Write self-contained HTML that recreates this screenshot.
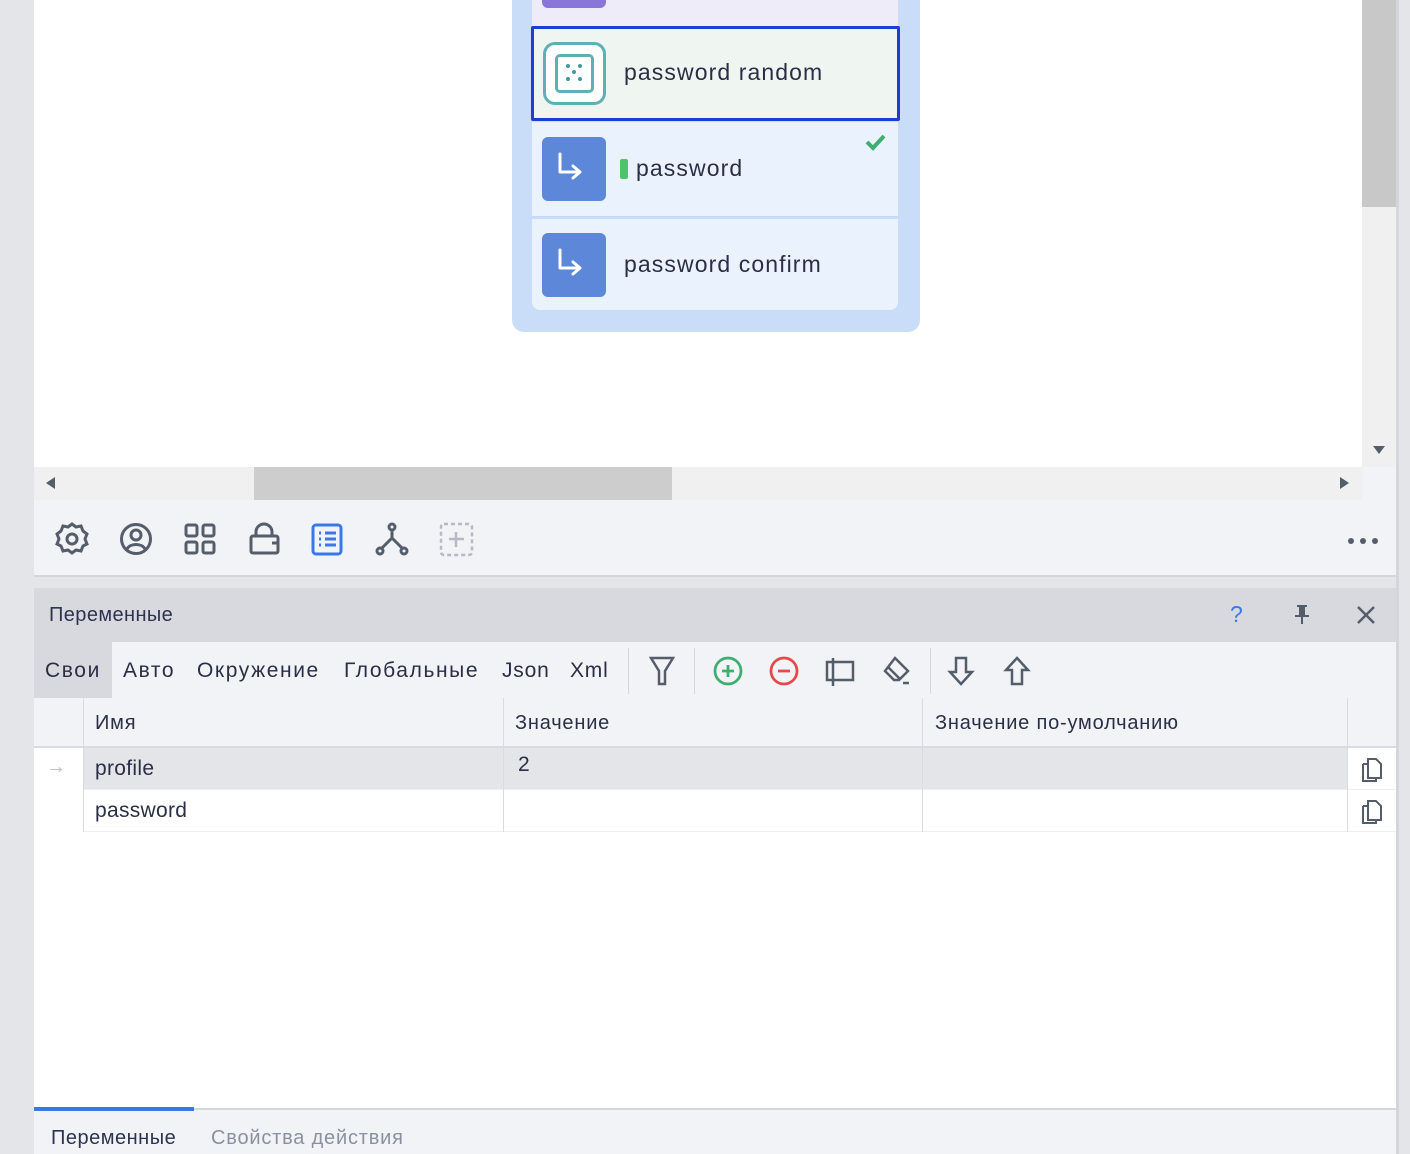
<!DOCTYPE html><html><head><meta charset="utf-8"><style>
*{margin:0;padding:0;box-sizing:border-box}
body{width:1410px;height:1154px;overflow:hidden;background:#e4e5e9;font-family:"Liberation Sans","DejaVu Sans",sans-serif;color:#2a2f45;position:relative}
.a{position:absolute}
.t{font-size:21px;white-space:nowrap;letter-spacing:0.8px}
.tab{letter-spacing:1.6px}
.n{font-size:23px;letter-spacing:1.1px}
svg{position:absolute;overflow:visible}
</style></head><body>
<!-- canvas -->
<div class="a" style="left:34px;top:0;width:1328px;height:467px;background:#fff"></div>
<div class="a" style="left:1362px;top:0;width:34px;height:467px;background:#f0f0f0"></div>
<div class="a" style="left:1362px;top:0;width:34px;height:207px;background:#c8c8c8"></div>
<div class="a" style="left:1373px;top:446px;width:0;height:0;border-left:6px solid transparent;border-right:6px solid transparent;border-top:8px solid #555d6b"></div>
<div class="a" style="left:34px;top:467px;width:1328px;height:33px;background:#f0f0f0"></div>
<div class="a" style="left:1362px;top:467px;width:34px;height:33px;background:#f2f3f7"></div>
<div class="a" style="left:254px;top:467px;width:418px;height:33px;background:#cdcdcd"></div>
<div class="a" style="left:46px;top:477px;border-top:6px solid transparent;border-bottom:6px solid transparent;border-right:9px solid #555d6b"></div>
<div class="a" style="left:1340px;top:477px;border-top:6px solid transparent;border-bottom:6px solid transparent;border-left:9px solid #555d6b"></div>
<!-- node -->
<div class="a" style="left:512px;top:-10px;width:408px;height:342px;background:#c9dcf8;border-radius:12px"></div>
<div class="a" style="left:532px;top:-10px;width:366px;height:36px;background:#eeecf8"></div>
<div class="a" style="left:542px;top:-10px;width:64px;height:18px;background:#8a75d9;border-radius:6px"></div>
<div class="a" style="left:531px;top:26px;width:369px;height:95px;background:#eff5f0;border:3px solid #1b3fd1;border-radius:2px"></div>
<div class="a" style="left:543px;top:42px;width:63px;height:63px;border:3px solid #5fb0b4;border-radius:12px;background:#fff"></div>
<div class="a" style="left:555px;top:54px;width:39px;height:39px;border:3px solid #5fb0b4;border-radius:5px"></div>
<svg style="left:555px;top:54px" width="39" height="39"><g fill="#3f9aa0"><circle cx="13" cy="12" r="2"/><circle cx="25" cy="12" r="2"/><circle cx="19" cy="18" r="2"/><circle cx="13" cy="25" r="2"/><circle cx="25" cy="25" r="2"/></g></svg>
<div class="a t n" style="left:624px;top:59px">password random</div>
<div class="a" style="left:532px;top:122px;width:366px;height:95px;background:#eaf2fd;border-bottom:1px solid #c5d8f5"></div>
<div class="a" style="left:532px;top:219px;width:366px;height:91px;background:#eaf2fd;border-radius:0 0 8px 8px"></div>
<div class="a" style="left:542px;top:137px;width:64px;height:64px;background:#5d87d9;border-radius:6px"></div>
<div class="a" style="left:542px;top:233px;width:64px;height:64px;background:#5d87d9;border-radius:6px"></div>
<svg style="left:542px;top:137px" width="64" height="64"><path d="M18 17V35H37M31 29L38 35L31 41" fill="none" stroke="#fff" stroke-width="3" stroke-linecap="round" stroke-linejoin="round"/></svg>
<svg style="left:542px;top:233px" width="64" height="64"><path d="M18 17V35H37M31 29L38 35L31 41" fill="none" stroke="#fff" stroke-width="3" stroke-linecap="round" stroke-linejoin="round"/></svg>
<div class="a" style="left:620px;top:159px;width:8px;height:20px;background:#4fc26e;border-radius:2px"></div>
<div class="a t n" style="left:636px;top:155px">password</div>
<div class="a t n" style="left:624px;top:251px">password confirm</div>
<svg style="left:864px;top:133px" width="24" height="18"><path d="M3 9L9 15L20 3" fill="none" stroke="#3fae73" stroke-width="4"/></svg>
<!-- toolbar -->
<div class="a" style="left:34px;top:500px;width:1362px;height:77px;background:#f2f3f7;border-bottom:2px solid #d4d6dc"></div>
<svg style="left:55px;top:522px" width="34" height="34" fill="none" stroke="#555d6b" stroke-width="3"><path d="M17 2l4 3 5-1 2 5 4 3-2 5 2 5-4 2-2 5-5-1-4 3-4-3-5 1-2-5-4-2 2-5-2-5 4-3 2-5 5 1z"/><circle cx="17" cy="17" r="5"/></svg>
<svg style="left:120px;top:523px" width="34" height="34" fill="none" stroke="#555d6b" stroke-width="3"><circle cx="16" cy="16" r="14.5"/><circle cx="16" cy="12" r="5"/><path d="M7 26c3-6 15-6 18 0"/></svg>
<svg style="left:184px;top:523px" width="34" height="34" fill="none" stroke="#555d6b" stroke-width="3"><rect x="2" y="2" width="11" height="11" rx="2"/><rect x="19" y="2" width="11" height="11" rx="2"/><rect x="2" y="19" width="11" height="11" rx="2"/><rect x="19" y="19" width="11" height="11" rx="2"/></svg>
<svg style="left:249px;top:522px" width="34" height="34" fill="none" stroke="#555d6b" stroke-width="3"><path d="M7 14V10a8 8 0 0116 0v4"/><rect x="2" y="14" width="27" height="17" rx="2"/><path d="M23 21h6"/></svg>
<svg style="left:311px;top:523px" width="34" height="34" fill="none" stroke="#3b78e7" stroke-width="3"><rect x="2" y="2" width="28" height="29" rx="3"/><path d="M8 10h2M14 10h11M8 16h2M14 16h11M8 22h2M14 22h11"/></svg>
<svg style="left:375px;top:522px" width="34" height="34" fill="none" stroke="#555d6b" stroke-width="3"><circle cx="17" cy="5" r="3"/><circle cx="5" cy="29" r="3"/><circle cx="29" cy="29" r="3"/><path d="M17 8v8M7 26l10-10 10 10"/></svg>
<svg style="left:440px;top:523px" width="34" height="34" fill="none" stroke="#b5bac6" stroke-width="2.5" stroke-dasharray="4 3"><rect x="1" y="1" width="31" height="31" rx="3"/><path d="M16 9v15M9 16h15" stroke-dasharray="none"/></svg>
<div class="a" style="left:1348px;top:538px;width:6px;height:6px;border-radius:3px;background:#555d6b;box-shadow:12px 0 #555d6b,24px 0 #555d6b"></div>
<!-- panel -->
<div class="a" style="left:34px;top:588px;width:1362px;height:54px;background:#d8d9de"></div>
<div class="a t" style="left:49px;top:604px;font-size:20px;color:#2e3350;letter-spacing:0.4px">Переменные</div>
<div class="a t" style="left:1230px;top:601px;font-size:23px;color:#3b78e7">?</div>
<svg style="left:1294px;top:605px" width="16" height="20" fill="#555d6b"><rect x="3" y="0" width="10" height="2"/><rect x="5" y="2" width="6" height="9"/><rect x="1" y="10" width="14" height="2"/><rect x="7" y="12" width="2" height="7"/></svg>
<svg style="left:1357px;top:606px" width="18" height="18" stroke="#555d6b" stroke-width="2.5"><path d="M1 1l16 16M17 1L1 17"/></svg>
<div class="a" style="left:34px;top:642px;width:1362px;height:56px;background:#f2f3f7"></div>
<div class="a" style="left:34px;top:642px;width:78px;height:56px;background:#d8d9de"></div>
<div class="a t tab" style="left:45px;top:659px">Свои</div>
<div class="a t tab" style="left:123px;top:659px">Авто</div>
<div class="a t tab" style="left:197px;top:659px">Окружение</div>
<div class="a t tab" style="left:344px;top:659px">Глобальные</div>
<div class="a t" style="left:502px;top:659px">Json</div>
<div class="a t" style="left:570px;top:659px">Xml</div>
<div class="a" style="left:628px;top:648px;width:1px;height:46px;background:#d4d6dc"></div>
<div class="a" style="left:694px;top:648px;width:1px;height:46px;background:#d4d6dc"></div>
<div class="a" style="left:930px;top:648px;width:1px;height:46px;background:#d4d6dc"></div>
<svg style="left:649px;top:656px" width="28" height="30" fill="none" stroke="#555d6b" stroke-width="2.5"><path d="M2 2h22L16 15v13h-6V15z"/></svg>
<svg style="left:713px;top:656px" width="30" height="30" fill="none" stroke="#3fae73" stroke-width="2.8"><circle cx="15" cy="15" r="13"/><path d="M15 9v12M9 15h12"/></svg>
<svg style="left:769px;top:656px" width="30" height="30" fill="none" stroke="#e34b4b" stroke-width="2.8"><circle cx="15" cy="15" r="13"/><path d="M9 15h12"/></svg>
<svg style="left:825px;top:657px" width="30" height="30" fill="none" stroke="#555d6b" stroke-width="2.5"><rect x="2" y="5" width="26" height="18"/><path d="M8 1v28"/></svg>
<svg style="left:881px;top:656px" width="30" height="30" fill="none" stroke="#555d6b" stroke-width="2.5"><path d="M14 2l13 13-9 9h-5l-9-9z"/><path d="M7 11l12 12M22 27h6"/></svg>
<svg style="left:948px;top:656px" width="26" height="30" fill="none" stroke="#555d6b" stroke-width="2.5"><path d="M8 2h10v14h6L13 28 2 16h6z"/></svg>
<svg style="left:1004px;top:656px" width="26" height="30" fill="none" stroke="#555d6b" stroke-width="2.5"><path d="M8 28h10V14h6L13 2 2 14h6z"/></svg>
<!-- table -->
<div class="a" style="left:34px;top:698px;width:1362px;height:50px;background:#f2f3f7;border-bottom:2px solid #d8dbe2"></div>
<div class="a" style="left:83px;top:698px;width:1px;height:134px;background:#d8dbe2"></div>
<div class="a" style="left:503px;top:698px;width:1px;height:134px;background:#d8dbe2"></div>
<div class="a" style="left:922px;top:698px;width:1px;height:134px;background:#d8dbe2"></div>
<div class="a" style="left:1347px;top:698px;width:1px;height:134px;background:#d8dbe2"></div>
<div class="a t" style="left:95px;top:712px;font-size:20px">Имя</div>
<div class="a t" style="left:515px;top:712px;font-size:20px">Значение</div>
<div class="a t" style="left:935px;top:712px;font-size:20px">Значение по-умолчанию</div>
<div class="a" style="left:34px;top:748px;width:1362px;height:360px;background:#fff"></div>
<div class="a" style="left:84px;top:748px;width:1263px;height:41px;background:#e4e5e9"></div>
<div class="a" style="left:84px;top:789px;width:1312px;height:1px;background:#eceef2"></div>
<div class="a" style="left:84px;top:831px;width:1312px;height:1px;background:#eceef2"></div>
<div class="a" style="left:83px;top:748px;width:1px;height:84px;background:#d8dbe2"></div>
<div class="a" style="left:503px;top:748px;width:1px;height:84px;background:#d8dbe2"></div>
<div class="a" style="left:922px;top:748px;width:1px;height:84px;background:#d8dbe2"></div>
<div class="a" style="left:1347px;top:748px;width:1px;height:84px;background:#d8dbe2"></div>
<div class="a t" style="left:46px;top:756px;font-size:20px;color:#b5bac6">→</div>
<div class="a t" style="left:95px;top:757px;font-size:21px;letter-spacing:0.3px">profile</div>
<div class="a t" style="left:518px;top:753px;font-size:21px">2</div>
<div class="a t" style="left:95px;top:799px;font-size:21px;letter-spacing:0.3px">password</div>
<svg style="left:1360px;top:755px" width="28" height="28" fill="none" stroke="#555d6b" stroke-width="2"><path d="M8 4h8l5 5v14H8z M3 9h5 M3 9v17h13v-3"/></svg>
<svg style="left:1360px;top:797px" width="28" height="28" fill="none" stroke="#555d6b" stroke-width="2"><path d="M8 4h8l5 5v14H8z M3 9h5 M3 9v17h13v-3"/></svg>
<!-- bottom tabs -->
<div class="a" style="left:34px;top:1108px;width:1362px;height:46px;background:#f2f3f7;border-top:2px solid #d4d6dc"></div>
<div class="a" style="left:34px;top:1107px;width:160px;height:4px;background:#3b78e7"></div>
<div class="a t" style="left:51px;top:1127px;font-size:20px;color:#2e3350;letter-spacing:0.5px">Переменные</div>
<div class="a t" style="left:211px;top:1127px;font-size:20px;color:#8a90a0;letter-spacing:0.8px">Свойства действия</div>
<div class="a" style="left:1396px;top:0;width:3px;height:1154px;background:#d4d6dc"></div>
</body></html>
